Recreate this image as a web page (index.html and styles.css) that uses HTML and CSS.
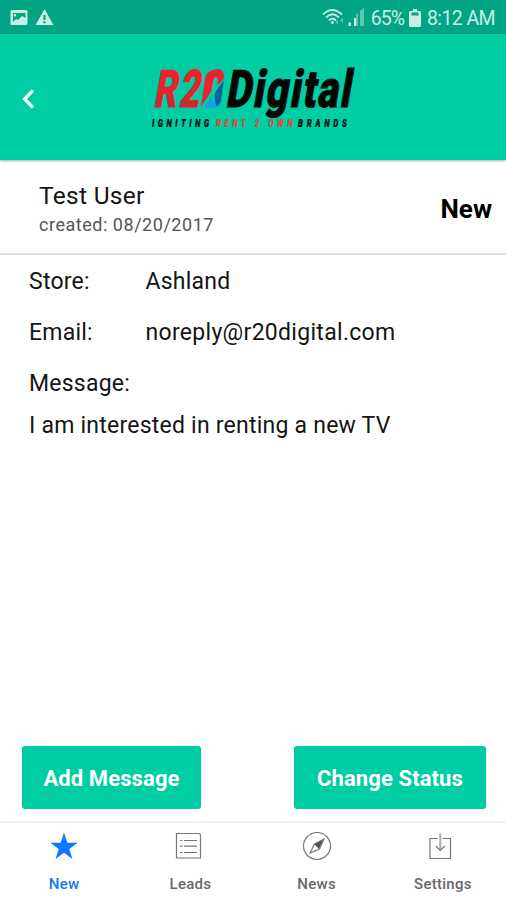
FILE: index.html
```html
<!DOCTYPE html>
<html lang="en">
<head>
<meta charset="utf-8">
<meta name="viewport" content="width=device-width, initial-scale=1">
<title>R20 Digital</title>
<link rel="stylesheet" href="styles.css">
</head>
<body>
<div class="app">
  <div class="statusbar">
    <svg class="notices" width="46" height="18" viewBox="0 0 46 18">
      <path fill-rule="evenodd" d="M2 1h14a1.500 1.500 0 0 1 1.500 1.500v12a1.500 1.500 0 0 1-1.500 1.500H2A1.500 1.500 0 0 1 .500 14.500v-12A1.500 1.500 0 0 1 2 1zM3 4v9l3-3 2 1 4-4 3.500 2V4zM5 5a1.300 1.300 0 1 1 0 2.600A1.300 1.300 0 0 1 5 5z"/>
      <path fill-rule="evenodd" d="M34.500 0L43.500 16h-18zM33.400 6v5h2.200V6zM33.400 12.300v2h2.200v-2z"/>
    </svg>
    <svg class="wifi" width="44" height="20" viewBox="0 0 44 20">
      <g fill="none" stroke="#bfebdc" stroke-width="1.800">
        <path d="M1 6.500Q10-2.500 20 6.500M4 9.500Q10.500 3 17 9.500M7 12.500Q10.500 9 14 12.500"/>
      </g>
      <circle cx="10.500" cy="14.500" r="1.500"/>
      <path class="faint" d="M13 14l3-2v4zM18 12l3-2v5zM34 7l2-2v13h-2zM38 3l4-3v18h-4z"/>
      <path d="M26.500 14.500h2.500V18h-2.500zM32 10h2v8h-2z"/>
    </svg>
    <span class="pct">65%</span>
    <svg class="battery" width="12" height="18" viewBox="0 0 12 18">
      <path fill-rule="evenodd" d="M4 0h4v2h2.500q1.500 0 1.500 1.500v13Q12 18 10.500 18h-9Q0 18 0 16.500v-13Q0 2 1.500 2H4zM2.500 3.500v3h7v-3z"/>
    </svg>
    <span class="clock">8:12 AM</span>
  </div>
  <header class="header">
    <svg class="back" width="14" height="22" viewBox="0 0 14 22"><path d="M11 2.500L2.500 11 11 19.500"/></svg>
    <svg class="logo" width="206" height="68" viewBox="0 0 206 68">
      <defs>
        <linearGradient id="red" x1="0" y1="0" x2="0" y2="1"><stop offset="0" stop-color="#ff2028"/><stop offset=".55" stop-color="#e02430"/><stop offset="1" stop-color="#b82838"/></linearGradient>
      </defs>
      <text class="word" transform="translate(2 42) skewX(-10) scale(.68 1)" textLength="101" fill="url(#red)" stroke="#e02430">R20</text>
      <path d="M48 44L58 30 73 4H80L75 44z" fill="#00cda4"/>
      <path d="M50 42l4-28q1-9 11-9 9 0 8 8l-3 4-4 4 1-5q0-4-3-4-3 0-4 4l-3 15z" fill="#e9242e"/>
      <path d="M65 26L52 43h12q6-1 7-7z" fill="#12a5df"/>
      <path d="M63 29l10-14-3 20q-1 5-5 6z" fill="#08649b"/>
      <path d="M62 28l3-5-2 12-3 2z" fill="#00cda4"/>
      <text class="word digital" transform="translate(74 42) skewX(-10) scale(.76 1)" textLength="164" fill="#050505" stroke="#050505">Digital</text>
      <g class="tag">
        <text transform="translate(1 62) scale(.75 1)" textLength="76" fill="#07100e" stroke="#07100e">IGNITING</text>
        <text transform="translate(65 62) scale(.75 1)" textLength="102" fill="#d94a3d" stroke="#d94a3d">RENT 2 OWN</text>
        <text transform="translate(147 62) scale(.75 1)" textLength="65" fill="#07100e" stroke="#07100e">BRANDS</text>
      </g>
    </svg>
  </header>
  <section class="lead">
    <div><div class="name">Test User</div><div class="created">created: 08/20/2017</div></div>
    <div class="state">New</div>
  </section>
  <main class="details">
    <div class="row"><span class="label">Store:</span><span class="store">Ashland</span></div>
    <div class="row"><span class="label">Email:</span><span class="email">noreply@r20digital.com</span></div>
    <div class="row last"><span class="label">Message:</span></div>
    <div class="message">I am interested in renting a new TV</div>
  </main>
  <div class="actions"><button class="add">Add Message</button><button class="change">Change Status</button></div>
  <nav class="tabs">
    <a class="tab active"><svg width="30" height="30" viewBox="0 0 30 30"><path class="star" d="M15 .500l3.300 10.200h10.400l-8.400 6.200 3.200 10-8.500-6.100-8.500 6.100 3.200-10-8.400-6.200h10.400z"/></svg><span>New</span></a>
    <a class="tab"><svg width="30" height="30" viewBox="0 0 30 30"><path d="M1.500 1.500h22q2 0 2 2v22.500h-24z"/><path d="M9 8.500h13M9 14.200h13M9 20.500h13M5 8.500h2.500M5 14.200h2.500M5 20.500h2.500"/></svg><span>Leads</span></a>
    <a class="tab"><svg width="30" height="30" viewBox="0 0 30 30"><circle cx="15" cy="14" r="13.500"/><path class="solid" d="M22 7L17 17 12 12z"/><path d="M22 7L17.500 17 8 21 12.500 12z"/></svg><span>News</span></a>
    <a class="tab"><svg width="30" height="30" viewBox="0 0 30 30"><path d="M10 6.500H2v20h20.500v-20h-8"/><path class="light" d="M12.300 1.500v17"/><path d="M7.800 14l4.500 4.500 4.500-4.500"/></svg><span>Settings</span></a>
  </nav>
</div>
</body>
</html>
```
FILE: styles.css
```css
* { box-sizing: border-box; }
body { margin: 0; background: #fff; font-family: Roboto, "Liberation Sans", sans-serif; color: #151515; }
.app { width: 506px; height: 900px; display: flex; flex-direction: column; }
.statusbar { height: 34px; flex: none; background: #02a583; display: flex; align-items: center; padding: 1px 11px 0 10px; color: #c9eee3; font-size: 19.500px; letter-spacing: -.6px; }
.statusbar svg { fill: #c9eee3; flex: none; }
.pct { letter-spacing: -1px; }
.clock { padding-top: 2px; }
.pct { padding-top: 2px; }
.wifi { margin-left: auto; margin-right: 5px; }
.wifi .faint { fill: #5fc6ad; }
.battery { margin: 0 6px 0 5px; }
.header { height: 126px; flex: none; background: #00cda4; display: flex; align-items: flex-start; box-shadow: 0 1px 2px rgba(0,0,0,.35); }
.back { margin: 54px 0 0 22px; fill: none; stroke: #fff; stroke-width: 3.200; }
.logo { margin: 31px 0 0 115px; overflow: visible; }
.word { font-size: 52px; font-weight: 900; stroke-width: .8; }
.tag { font-size: 10.500px; font-weight: 900; font-style: italic; stroke-width: .2; }
.lead { height: 95px; flex: none; display: flex; justify-content: space-between; border-bottom: 2px solid #dedede; padding: 20px 14px 0 39px; }
.name { font-size: 24.500px; line-height: 32px; letter-spacing: .3px; }
.created { font-size: 18px; line-height: 25px; letter-spacing: .53px; color: #555; }
.state { font-size: 26px; font-weight: 700; line-height: 58px; color: #000; }
.details { flex: 1; padding: 12px 29px 0; font-size: 23px; line-height: 30px; letter-spacing: .23px; }
.email { letter-spacing: .3px; }
.row { display: flex; margin-bottom: 21px; }
.row.last { margin-bottom: 12px; }
.label { width: 116.500px; }
.actions { height: 75px; flex: none; display: flex; justify-content: space-between; padding: 0 20px 0 22px; }
.actions button { height: 63px; border: 0; border-radius: 3px; background: #00cda4; color: #fff; font: 700 22px Roboto, sans-serif; padding: 2px 0 0; letter-spacing: .1px; }
.add { width: 179px; }
.change { width: 192px; }
.tabs { height: 79px; flex: none; border-top: 2px solid #f1f1f1; display: grid; grid-template-columns: repeat(4, 1fr); padding-left: 1px; }
.tab { display: flex; flex-direction: column; align-items: center; padding-top: 9px; color: #686868; font-size: 15px; line-height: 20px; font-weight: 500; letter-spacing: .25px; }
.tab svg { fill: none; stroke: #777; stroke-width: 1.200; margin-bottom: 12px; }
.tab .star { fill: #087bff; stroke: none; }
.tab .solid { fill: #555; stroke: none; }
.tab .light { stroke: #aaa; stroke-width: 2; }
.active { color: #1677ed; }
```
